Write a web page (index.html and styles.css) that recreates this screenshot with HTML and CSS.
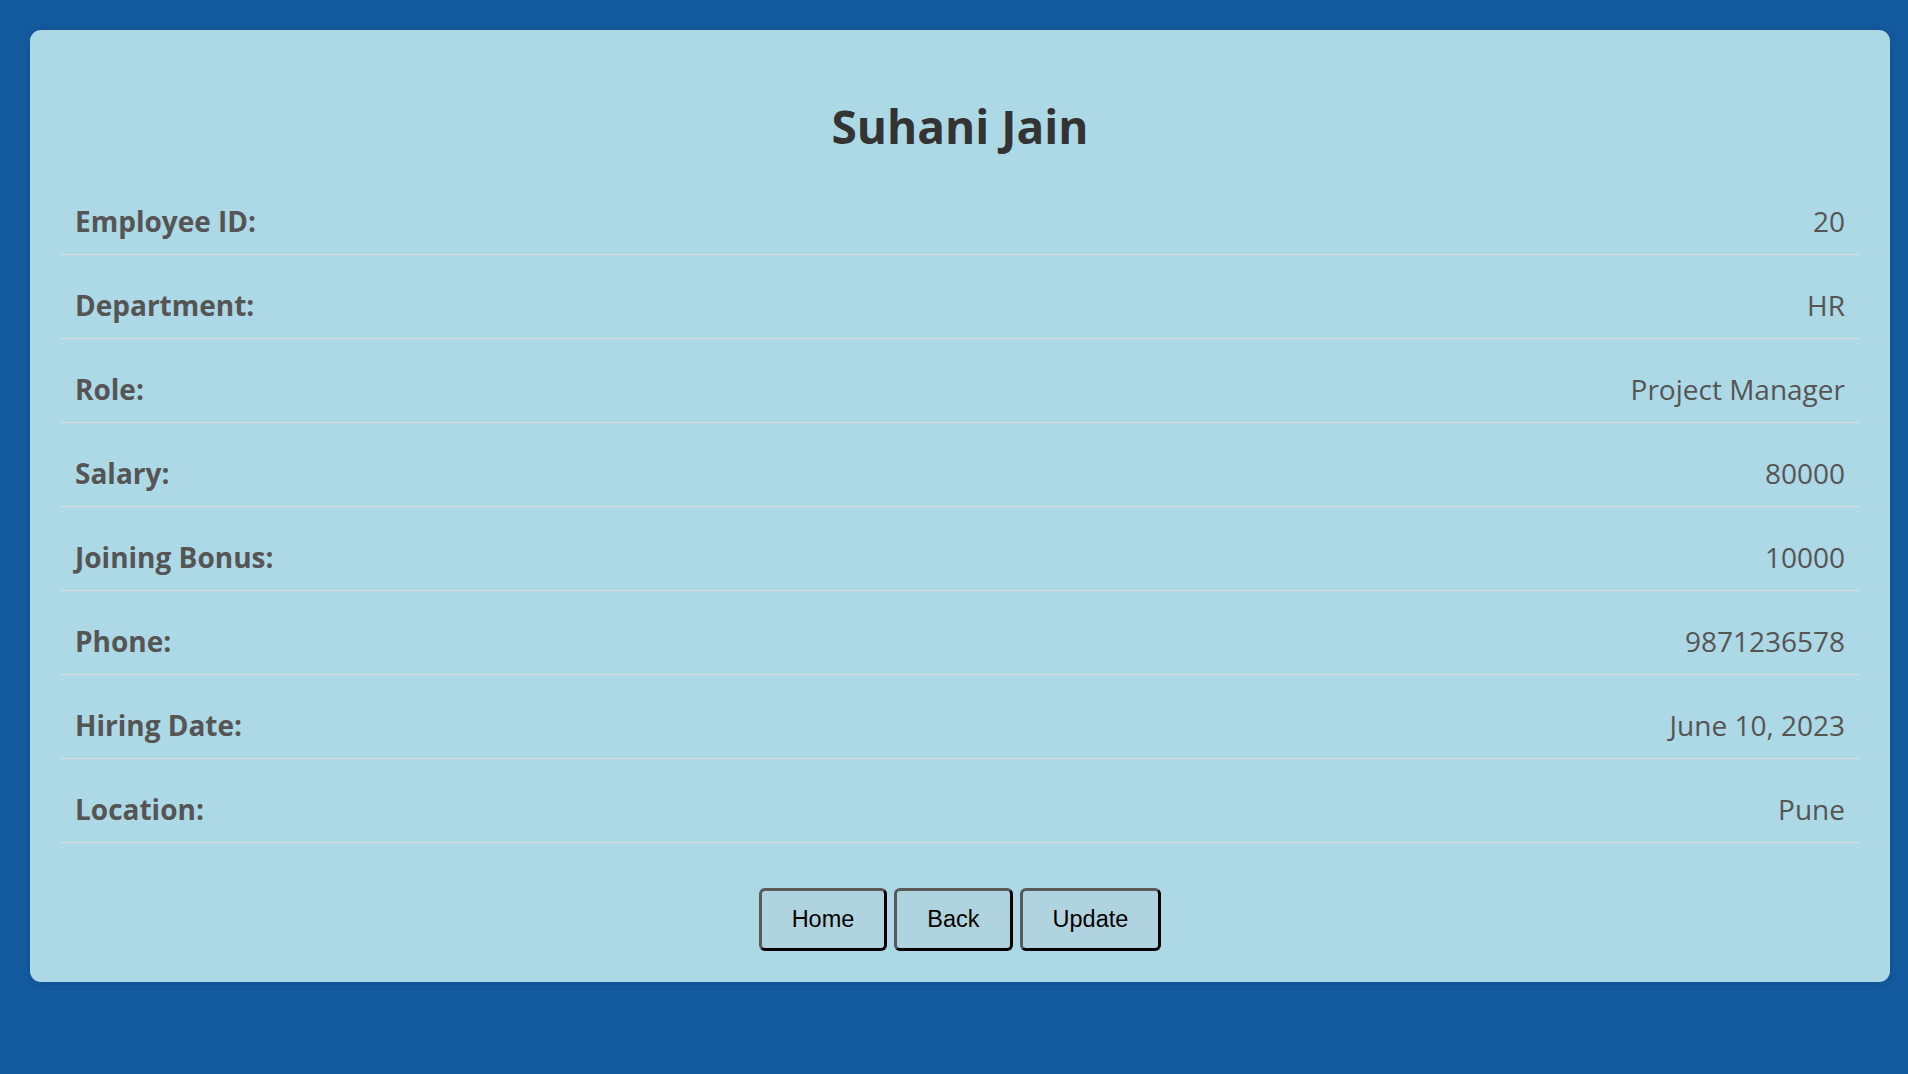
FILE: index.html
```html
<!DOCTYPE html>
<html lang="en">
<head>
<meta charset="utf-8">
<title>Employee Details</title>
<link rel="stylesheet" href="styles.css">
</head>
<body>
<div class="card">
  <h1 class="title">Suhani Jain</h1>
  <div class="rows">
    <div class="row"><span class="label">Employee ID:</span><span class="value">20</span></div>
    <div class="row"><span class="label">Department:</span><span class="value">HR</span></div>
    <div class="row"><span class="label">Role:</span><span class="value">Project Manager</span></div>
    <div class="row"><span class="label">Salary:</span><span class="value">80000</span></div>
    <div class="row"><span class="label">Joining Bonus:</span><span class="value">10000</span></div>
    <div class="row"><span class="label">Phone:</span><span class="value">9871236578</span></div>
    <div class="row"><span class="label">Hiring Date:</span><span class="value">June 10, 2023</span></div>
    <div class="row"><span class="label">Location:</span><span class="value">Pune</span></div>
  </div>
  <div class="actions">
    <button class="btn btn-home">Home</button>
    <button class="btn btn-back">Back</button>
    <button class="btn btn-update">Update</button>
  </div>
</div>
</body>
</html>
```
FILE: styles.css
```css
html, body {
  margin: 0;
  padding: 0;
}
body {
  background: #135a9e;
  height: 1074px;
  padding: 30px 18px 0 30px;
  box-sizing: border-box;
  font-family: "Open Sans", "Noto Sans", sans-serif;
}
.card {
  width: 1860px;
  box-sizing: border-box;
  background: #add8e6;
  border-radius: 11px;
  padding: 0 30px 31px 30px;
  box-shadow: 0 0 10px rgba(0, 0, 0, 0.12);
}
.title {
  margin: 0;
  padding-top: 66px;
  font-size: 46px;
  line-height: 60px;
  font-weight: 700;
  color: #333;
  text-align: center;
}
.rows {
  margin-top: 15px;
  display: flex;
  flex-direction: column;
}
.row {
  display: flex;
  justify-content: space-between;
  align-items: flex-start;
  padding: 30px 15px 13px 15px;
  border-bottom: 1px solid #dcdcdc;
  font-size: 28px;
  line-height: 40px;
  color: #555;
}
.label {
  font-weight: 700;
}
.value {
  font-weight: 400;
}
.actions {
  display: flex;
  justify-content: center;
  gap: 7px;
  margin-top: 45px;
}
.btn {
  height: 63px;
  box-sizing: border-box;
  padding: 0 30px;
  font-family: "Liberation Sans", Arial, sans-serif;
  font-size: 23.5px;
  color: #000;
  background: #b0d4df;
  border: 3px solid;
  border-color: #5a5a5a #000 #000 #5a5a5a;
  border-radius: 6px;
}
```
